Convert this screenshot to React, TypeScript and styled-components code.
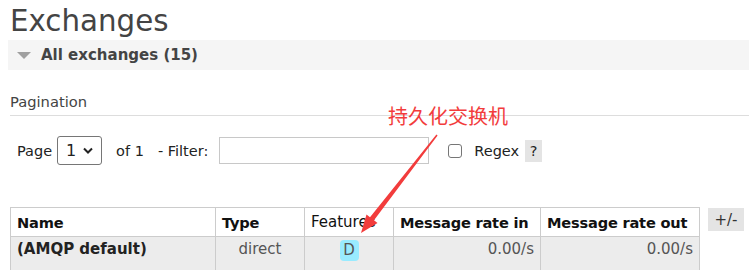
import React from "react";
import styled, { createGlobalStyle } from "styled-components";

const GlobalStyle = createGlobalStyle`
  html, body {
    margin: 0;
    padding: 0;
    background: #fff;
  }
  body {
    font-family: "DejaVu Sans", Verdana, sans-serif;
    font-size: 15px;
    color: #222;
  }
`;

const Page = styled.div`
  position: relative;
  width: 749px;
  height: 270px;
  overflow: hidden;
  padding: 0 0 0 10px;
  box-sizing: border-box;
`;

const Title = styled.h1`
  margin: 0;
  padding-top: 3px;
  font-size: 29.3px;
  line-height: 36px;
  font-weight: normal;
  color: #444;
`;

const SectionBar = styled.div`
  margin: 1px 0 0 -2px;
  height: 30px;
  background: #f5f5f5;
  display: flex;
  align-items: center;
  padding-left: 9px;
  gap: 10px;
  font-weight: bold;
  font-size: 15px;
  color: #444;
`;

const Triangle = styled.span`
  width: 0;
  height: 0;
  border-left: 7px solid transparent;
  border-right: 7px solid transparent;
  border-top: 7px solid #a0a0a0;
`;

const SubTitle = styled.div`
  margin-top: 23px;
  padding-bottom: 5px;
  font-size: 14.7px;
  color: #444;
  border-bottom: 1px solid #ddd;
`;

const Controls = styled.div`
  display: flex;
  align-items: center;
  margin-top: 20px;
  padding-left: 7px;
  font-size: 14.5px;
  color: #222;
  & > * {
    flex-shrink: 0;
  }
`;

const Select = styled.div`
  margin-left: 5px;
  width: 45px;
  height: 29px;
  box-sizing: border-box;
  border: 1px solid #767676;
  border-radius: 3px;
  display: flex;
  align-items: center;
  justify-content: space-between;
  padding: 0 8px 0 8px;
  font-size: 16px;
`;

const Label = styled.span<{ $ml: number }>`
  margin-left: ${(p) => p.$ml}px;
`;

const TextInput = styled.div`
  margin-left: 11px;
  width: 210px;
  height: 27px;
  box-sizing: border-box;
  border: 1px solid #c8c8c8;
`;

const Checkbox = styled.span`
  margin-left: 19px;
  width: 14px;
  height: 14px;
  box-sizing: border-box;
  border: 1px solid #767676;
  border-radius: 3px;
`;

const HelpTag = styled.span`
  margin-left: 6px;
  width: 17px;
  height: 22px;
  background: #e4e4e4;
  display: flex;
  align-items: center;
  justify-content: center;
`;

const TableRow = styled.div`
  display: flex;
  align-items: flex-start;
  margin-top: 42px;
`;

const Table = styled.table`
  border-collapse: collapse;
  table-layout: fixed;
  width: 690px;
  font-size: 15px;
  td, th {
    border: 1px solid #ccc;
    padding: 0 6px;
    overflow: hidden;
  }
`;

const HeadCell = styled.th<{ $light?: boolean }>`
  height: 28px;
  text-align: left;
  font-weight: ${(p) => (p.$light ? "normal" : "bold")};
  font-size: ${(p) => (p.$light ? "15px" : "14.6px")};
  letter-spacing: ${(p) => (p.$light ? "0" : "-0.2px")};
  color: #111;
  white-space: nowrap;
`;

const Cell = styled.td<{ $align?: string; $bold?: boolean }>`
  height: 31px;
  background: #ececec;
  text-align: ${(p) => p.$align || "left"};
  font-weight: ${(p) => (p.$bold ? "bold" : "normal")};
  color: ${(p) => (p.$bold ? "#222" : "#555")};
  vertical-align: top;
  padding-top: 3px !important;
  white-space: nowrap;
`;

const Badge = styled.span`
  display: inline-block;
  width: 19px;
  height: 21px;
  line-height: 21px;
  margin-top: 0;
  border-radius: 4px;
  background: #99ebff;
  color: #555;
  text-align: center;
`;

const ColumnsToggle = styled.span`
  margin: 1px 0 0 8px;
  width: 36px;
  height: 23px;
  background: #e4e4e4;
  display: flex;
  align-items: center;
  justify-content: center;
  color: #333;
`;

const Note = styled.div`
  position: absolute;
  left: 388px;
  top: 103px;
  font-family: "Noto Sans CJK SC", sans-serif;
  font-size: 20px;
  line-height: 26px;
  color: #f23c3c;
`;

const Overlay = styled.svg`
  position: absolute;
  left: 0;
  top: 0;
  pointer-events: none;
`;

const Chevron = () => (
  <svg width="10" height="7" viewBox="0 0 10 7">
    <path d="M1 1.5 L5 5.5 L9 1.5" fill="none" stroke="#222" strokeWidth="2" />
  </svg>
);

const columnWidths = [205, 89, 89, 147, 159];

export default function App() {
  return (
    <>
      <GlobalStyle />
      <Page>
        <Title>Exchanges</Title>
        <SectionBar>
          <Triangle />
          All exchanges (15)
        </SectionBar>
        <SubTitle>Pagination</SubTitle>
        <Controls>
          <span>Page</span>
          <Select>
            1 <Chevron />
          </Select>
          <Label $ml={14}>of 1</Label>
          <Label $ml={14}>- Filter:</Label>
          <TextInput />
          <Checkbox />
          <Label $ml={12}>Regex</Label>
          <HelpTag>?</HelpTag>
        </Controls>
        <TableRow>
          <Table>
            <colgroup>
              {columnWidths.map((w, i) => (
                <col key={i} style={{ width: w }} />
              ))}
            </colgroup>
            <thead>
              <tr>
                <HeadCell>Name</HeadCell>
                <HeadCell>Type</HeadCell>
                <HeadCell $light>Features</HeadCell>
                <HeadCell>Message rate in</HeadCell>
                <HeadCell>Message rate out</HeadCell>
              </tr>
            </thead>
            <tbody>
              <tr>
                <Cell $bold>(AMQP default)</Cell>
                <Cell $align="center">direct</Cell>
                <Cell $align="center">
                  <Badge>D</Badge>
                </Cell>
                <Cell $align="right">0.00/s</Cell>
                <Cell $align="right">0.00/s</Cell>
              </tr>
            </tbody>
          </Table>
          <ColumnsToggle>+/-</ColumnsToggle>
        </TableRow>
        <Note>持久化交换机</Note>
        <Overlay width="749" height="270">
          <polygon
            points="436.4,134.6 437.6,135.4 374,220.3 377.5,223.1 361,233 366.5,214.5 370,217.3"
            fill="#f23c3c"
          />
        </Overlay>
      </Page>
    </>
  );
}
